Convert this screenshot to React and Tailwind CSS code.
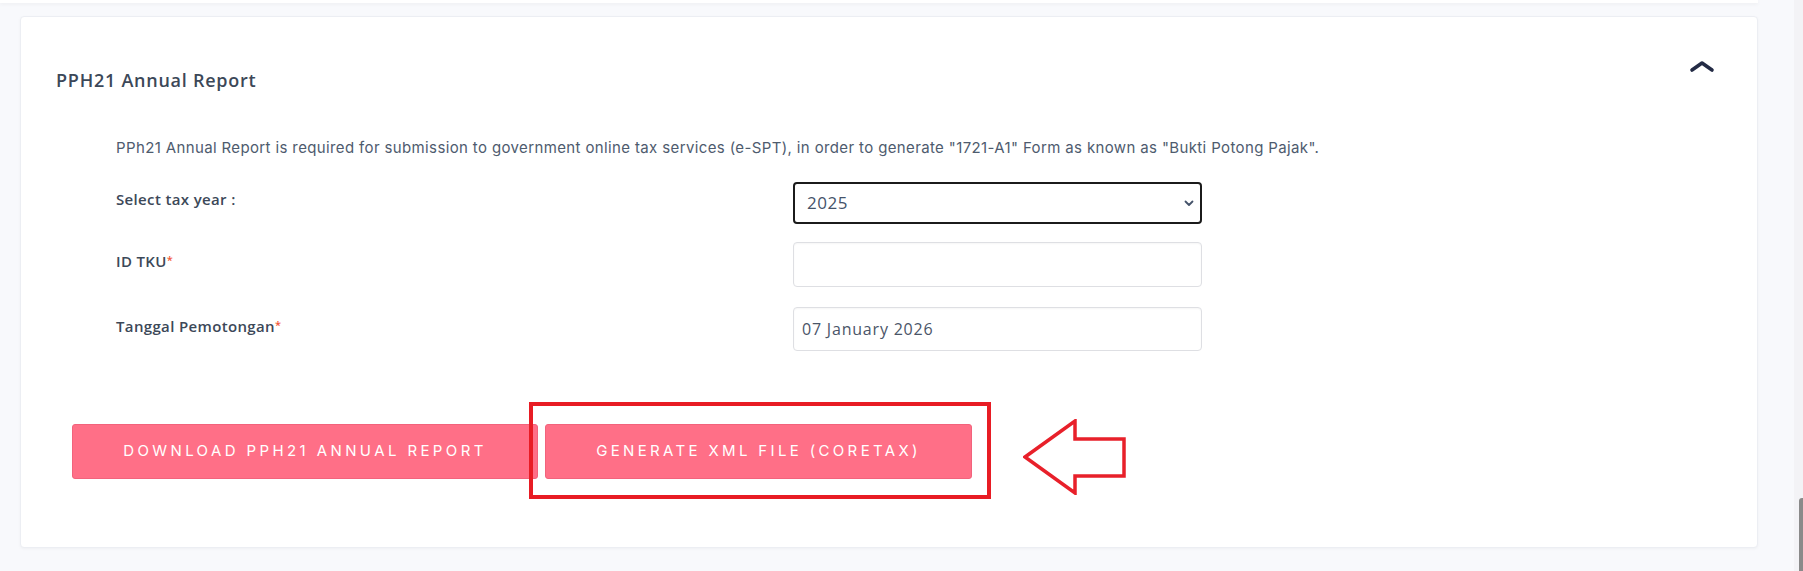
import React from "react";

function ChevronUp() {
  return (
    <svg width="26" height="14" viewBox="0 0 26 14" className="mt-[0px]">
      <polyline points="3,11 13,4 23,11" fill="none" stroke="#232b45" strokeWidth="3.6" strokeLinecap="round" strokeLinejoin="round" />
    </svg>
  );
}

function Label({ children, required, low }) {
  return (
    <div className={(low ? "pt-[9px] " : "pt-[7px] ") + "text-[15px] leading-[20px] font-semibold text-[#3c4858] tracking-[0.35px]"}>
      {children}
      {required && <span className="text-[#f2583a] text-[11px] align-top relative top-[-1px]">*</span>}
    </div>
  );
}

export default function App() {
  return (
    <div className="flex h-[571px] w-full overflow-hidden bg-[#f8f9fc] font-['Open_Sans',sans-serif]">
      <div className="flex-1 flex flex-col pl-[20px] pr-[36px]">
        <div className="h-[3px] -ml-[20px] bg-white shadow-[0_1px_4px_rgba(0,0,0,0.06)]" />
        <div className="mt-[13px] h-[532px] rounded-[4px] border border-[#eceef3] bg-white shadow-[0_1px_3px_rgba(0,0,0,0.04)]">
          <div className="flex justify-between items-start pt-[42px] pl-[35px] pr-[42px]">
            <div className="mt-[9px] text-[18px] leading-[24px] font-semibold text-[#3c4858] tracking-[0.75px]">
              PPH21 Annual Report
            </div>
            <ChevronUp />
          </div>
          <div className="pl-[95px]">
            <p className="mt-[46px] font-['Inter',sans-serif] text-[15px] leading-[20px] text-[#4e5b6e] tracking-[0.37px]">
              PPh21 Annual Report is required for submission to government online tax services (e-SPT), in order to generate "1721-A1" Form as known as "Bukti Potong Pajak".
            </p>
            <div className="mt-[24px] flex flex-col">
              <div className="grid grid-cols-[677px_409px]">
                <Label>Select tax year :</Label>
                <div className="relative h-[42px] rounded-[4px] border-2 border-[#1b1b1b] flex items-center pl-[12px] text-[17px] text-[#45536a] tracking-[0.5px]">
                  2025
                  <svg width="10" height="7" viewBox="0 0 10 7" className="absolute right-[6px] top-[16px]">
                    <polyline points="1.5,1.5 5,5 8.5,1.5" fill="none" stroke="#45536a" strokeWidth="1.8" strokeLinecap="round" strokeLinejoin="round" />
                  </svg>
                </div>
              </div>
              <div className="mt-[18px] grid grid-cols-[677px_409px]">
                <Label required low>ID TKU</Label>
                <div className="h-[45px] rounded-[4px] border border-[#dedfe3] shadow-[inset_0_1px_2px_rgba(0,0,0,0.04)]" />
              </div>
              <div className="mt-[20px] grid grid-cols-[677px_409px]">
                <Label required low>Tanggal Pemotongan</Label>
                <div className="h-[44px] rounded-[4px] border border-[#dedfe3] shadow-[inset_0_1px_2px_rgba(0,0,0,0.04)] flex items-center pl-[8px] text-[16px] text-[#4a5568] tracking-[0.8px]">
                  07 January 2026
                </div>
              </div>
            </div>
          </div>
          <div className="relative mt-[73px] ml-[51px] flex gap-[7px]">
            <button className="h-[55px] w-[466px] rounded-[3px] border border-[#f2637c] bg-[#ff6f87] text-white text-[15px] tracking-[3.4px] font-['Inter',sans-serif]">
              DOWNLOAD PPH21 ANNUAL REPORT
            </button>
            <button className="h-[55px] w-[427px] rounded-[3px] border border-[#f2637c] bg-[#ff6f87] text-white text-[15px] tracking-[3.35px] font-['Inter',sans-serif]">
              GENERATE XML FILE (CORETAX)
            </button>
            <div className="absolute left-[457px] top-[-22px] w-[462px] h-[97px] border-[4px] border-[#e81c24] pointer-events-none" />
            <svg width="104" height="76" viewBox="0 0 104 76" className="absolute left-[951px] top-[-5px]">
              <polygon points="2,38 52,2 52,20 101,20 101,57 52,57 52,74" fill="none" stroke="#e8202a" strokeWidth="3.5" strokeLinejoin="miter" />
            </svg>
          </div>
        </div>
      </div>
      <div className="w-[9px] bg-[#f3f3f6] flex flex-col justify-end items-end">
        <div className="w-[4px] h-[73px] bg-[#8a8a8a] rounded-tl-[3px]" />
      </div>
    </div>
  );
}
